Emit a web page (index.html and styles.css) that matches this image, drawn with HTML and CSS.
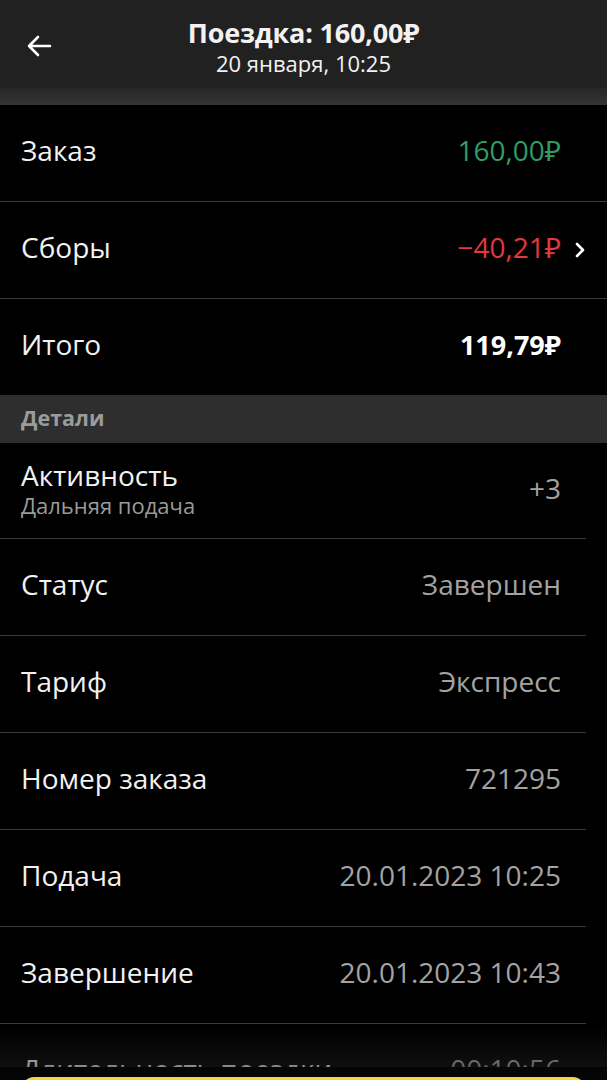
FILE: index.html
```html
<!DOCTYPE html>
<html lang="ru">
<head>
    <meta charset="UTF-8">
    <meta name="viewport" content="width=device-width, initial-scale=1.0">
    <title>Поездка</title>
    <link rel="stylesheet" href="styles.css">
</head>
<body>
    <!-- Шапка -->
    <header class="topbar">
        <button class="back" aria-label="Назад">
            <svg width="26" height="26" viewBox="0 0 26 26">
                <path d="M24 13H3 M12 4L3 13L12 22" fill="none" stroke="#fff" stroke-width="2.6" stroke-linecap="round" stroke-linejoin="round"/>
            </svg>
        </button>
        <div class="title">
            <div class="title-main">Поездка: 160,00₽</div>
            <div class="title-sub">20 января, 10:25</div>
        </div>
    </header>
    <div class="shade"></div>

    <!-- Суммы -->
    <section class="group">
        <div class="row full">
            <span class="label">Заказ</span>
            <span class="value green">160,00₽</span>
        </div>
        <div class="row full">
            <span class="label">Сборы</span>
            <span class="value red">−40,21₽</span>
            <svg class="chevron" width="14" height="18" viewBox="0 0 14 18">
                <path d="M4 3L10 9L4 15" fill="none" stroke="#fff" stroke-width="2.6" stroke-linecap="round" stroke-linejoin="round"/>
            </svg>
        </div>
        <div class="row">
            <span class="label">Итого</span>
            <span class="value strong">119,79₽</span>
        </div>
    </section>

    <!-- Детали -->
    <div class="section-title">Детали</div>
    <section class="group details">
        <div class="row">
            <div class="label-box">
                <span class="label">Активность</span>
                <span class="hint">Дальняя подача</span>
            </div>
            <span class="value">+3</span>
        </div>
        <div class="row">
            <span class="label">Статус</span>
            <span class="value">Завершен</span>
        </div>
        <div class="row">
            <span class="label">Тариф</span>
            <span class="value">Экспресс</span>
        </div>
        <div class="row">
            <span class="label">Номер заказа</span>
            <span class="value">721295</span>
        </div>
        <div class="row">
            <span class="label">Подача</span>
            <span class="value">20.01.2023 10:25</span>
        </div>
        <div class="row">
            <span class="label">Завершение</span>
            <span class="value">20.01.2023 10:43</span>
        </div>
        <div class="row">
            <span class="label">Длительность поездки</span>
            <span class="value">00:10:56</span>
        </div>
    </section>

    <!-- Нижняя панель -->
    <footer class="bottom">
        <div class="fade"></div>
        <div class="bottom-bar">
            <div class="main-btn"></div>
        </div>
    </footer>
</body>
</html>
```

FILE: styles.css
```css
body {
    margin: 0;
    height: 1080px;
    overflow: hidden;
    background-color: #000;
    color: #f2f2f2;
    font-family: "Open Sans", "Noto Sans", sans-serif;
}

.topbar {
    height: 71px;
    padding-top: 17px;
    background-color: #212121;
    display: flex;
    justify-content: center;
    position: relative;
}

.back {
    position: absolute;
    left: 26px;
    top: 33px;
    background: none;
    border: 0;
    padding: 0;
    display: flex;
}

.title {
    text-align: center;
}

.title-main {
    font-size: 27px;
    font-weight: 700;
    line-height: 32px;
    letter-spacing: -0.2px;
}

.title-sub {
    font-size: 22px;
    line-height: 28px;
}

.shade {
    height: 17px;
    background: linear-gradient(#272727, #343434);
}

.group .row {
    height: 90px;
    display: flex;
    align-items: center;
    padding: 0 46px 6px 21px;
    border-bottom: 1px solid #3a3a3a;
    position: relative;
}

.group .row:last-child {
    border-bottom: 0;
}

.details .row {
    margin-right: 21px;
    padding-right: 25px;
}

.details .row:first-child {
    height: 89px;
}

.label {
    font-size: 28px;
    flex: 1;
    white-space: nowrap;
}

.label-box {
    flex: 1;
    display: flex;
    flex-direction: column;
}

.label-box .label {
    line-height: 34px;
}

.hint {
    font-size: 22px;
    color: #9a9a9a;
    line-height: 26px;
}

.value {
    font-size: 28px;
    color: #a3a3a3;
    white-space: nowrap;
}

.value.green {
    color: #2f9e62;
}

.value.red {
    color: #e0393f;
}

.value.strong {
    color: #fff;
    font-weight: 700;
    font-size: 27px;
}

.chevron {
    position: absolute;
    right: 20px;
    top: 39px;
}

.section-title {
    height: 48px;
    line-height: 46px;
    background-color: #2e2e2e;
    color: #9b9b9b;
    font-size: 21.5px;
    font-weight: 700;
    padding-left: 21px;
}

.bottom {
    position: fixed;
    left: 0;
    right: 0;
    bottom: 0;
}

.fade {
    height: 42px;
    background: linear-gradient(rgba(30, 30, 30, 0), rgba(30, 30, 30, 0.5));
}

.bottom-bar {
    height: 3px;
    background-color: #050505;
    padding: 10px 22px 0;
}

.main-btn {
    height: 40px;
    background-color: #f5d73a;
    border-radius: 12px;
}
```
